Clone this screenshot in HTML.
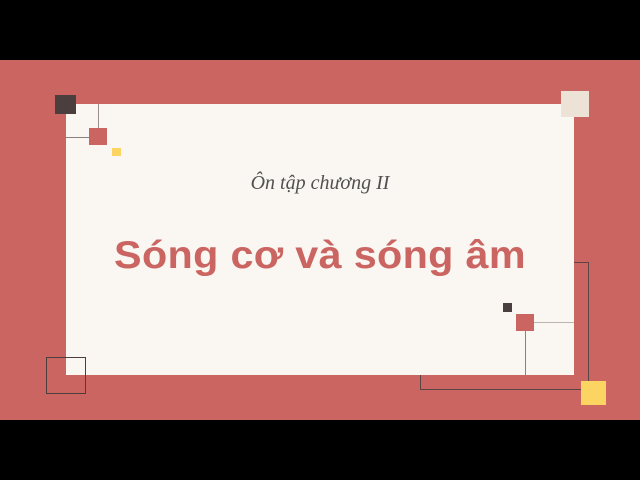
<!DOCTYPE html>
<html><head><meta charset="utf-8"><style>
*{margin:0;padding:0}
body{width:640px;height:480px;background:#000;position:relative;overflow:hidden;font-family:"Liberation Sans",sans-serif}
div{position:absolute}
</style></head><body>
<div style="left:0;top:60px;width:640px;height:360px;background:#cb6561"></div>
<div style="left:66px;top:104px;width:508px;height:271px;background:#faf6f2"></div>
<div style="left:55px;top:95px;width:21px;height:19px;background:#4b3e3e"></div>
<div style="left:98px;top:104px;width:1px;height:24px;background:#9a9090"></div>
<div style="left:66px;top:137px;width:23px;height:1px;background:#8a8080"></div>
<div style="left:89px;top:128px;width:18px;height:17px;background:#cb6561"></div>
<div style="left:112px;top:148px;width:9px;height:8px;background:#fcd462"></div>
<div style="left:561px;top:91px;width:28px;height:26px;background:#ece2d6"></div>
<div style="left:46px;top:357px;width:38px;height:35px;border:1px solid #4b3e3e"></div>
<div style="left:574px;top:262px;width:15px;height:1px;background:#5a4444"></div>
<div style="left:588px;top:262px;width:1px;height:120px;background:#5a4444"></div>
<div style="left:420px;top:375px;width:1px;height:15px;background:#5a4444"></div>
<div style="left:420px;top:389px;width:162px;height:1px;background:#5a4444"></div>
<div style="left:581px;top:381px;width:25px;height:24px;background:#fcd462"></div>
<div style="left:503px;top:303px;width:9px;height:9px;background:#4b3e3e"></div>
<div style="left:516px;top:314px;width:18px;height:17px;background:#cb6561"></div>
<div style="left:534px;top:322px;width:40px;height:1px;background:#bdb6b0"></div>
<div style="left:525px;top:331px;width:1px;height:44px;background:#8a8080"></div>
<div style="left:0;width:640px;top:172px;text-align:center;font-family:'Liberation Serif',serif;font-style:italic;font-size:20px;color:#505050">Ôn tập chương II</div>
<div style="left:0;width:640px;top:234px;text-align:center;font-weight:bold;font-size:39px;color:#cb6561;letter-spacing:0.3px;transform:scaleX(1.06)">Sóng cơ và sóng âm</div>
</body></html>
